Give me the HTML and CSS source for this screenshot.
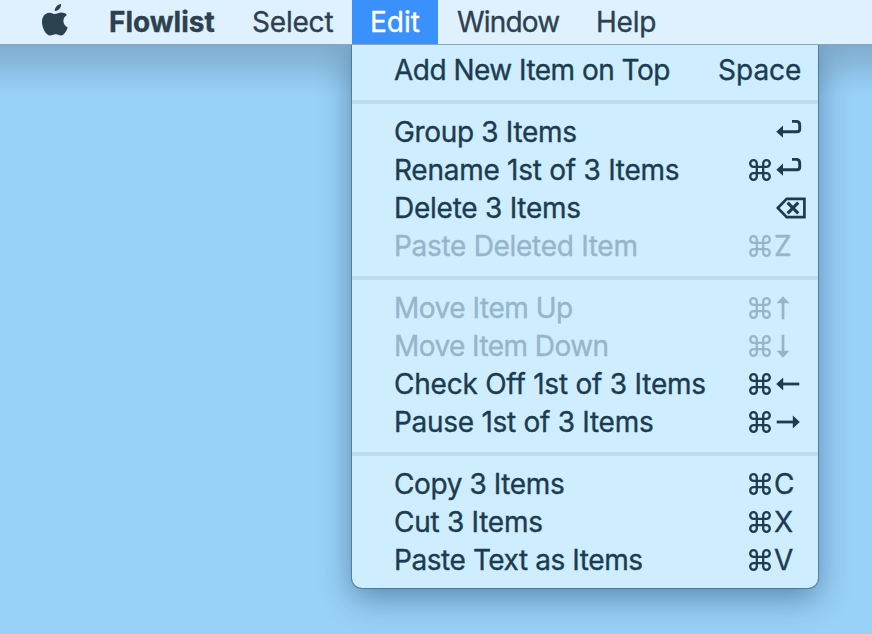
FILE: index.html
```html
<!DOCTYPE html>
<html lang="en">
<head>
<meta charset="utf-8">
<title>Flowlist</title>
<link rel="stylesheet" href="styles.css">
</head>
<body>
<svg class="defs" aria-hidden="true">
  <symbol id="cmd" viewBox="0 0 22 22"><path d="M7.8 4.5A3.3 3.3 0 1 0 4.5 7.8H17.5A3.3 3.3 0 1 0 14.2 4.5V17.5A3.3 3.3 0 1 0 17.5 14.2H4.5A3.3 3.3 0 1 0 7.8 17.5Z" fill="none" stroke="currentColor" stroke-width="2.3"/></symbol>
  <symbol id="return" viewBox="0 0 26 20"><path d="M16 2.4H20.2Q23.7 2.4 23.7 6V10.2Q23.7 12.7 21 12.7H5" fill="none" stroke="currentColor" stroke-width="2.9"/><path d="M.3 12.7 7 6.6V18.8Z" fill="currentColor"/></symbol>
  <symbol id="delete" viewBox="0 0 30 22"><path d="M1.8 11 10.7 1.9H28.4V20.1H10.7Z" fill="none" stroke="currentColor" stroke-width="2.7"/><path d="M11.6 5.6 22.2 16.4M22.2 5.6 11.6 16.4" fill="none" stroke="currentColor" stroke-width="3.1"/></symbol>
  <symbol id="left" viewBox="0 0 24 14"><path d="M5 7H23.3" stroke="currentColor" stroke-width="2.8"/><path d="M.2 7 7.2 .5V13.5Z" fill="currentColor"/></symbol>
  <symbol id="up" viewBox="0 0 14 24"><path d="M7 5V23.3" stroke="currentColor" stroke-width="2.8"/><path d="M7 .3 13.5 7.2H.5Z" fill="currentColor"/></symbol>
</svg>
<nav class="menubar">
  <svg class="apple" viewBox="0 0 26 32"><path d="M13 10.1C11.6 10.1 9.8 8.7 7.5 8.7 3.2 8.7 0 12.3 0 18.2 0 24.2 4.3 31.5 8 31.5 9.9 31.5 11 30.2 13.6 30.2 16.1 30.2 16.7 31.4 18.9 31.4 22.2 31.4 24.8 26.2 25.7 23.4 23.1 22.3 21.4 20 21.4 17.1 21.4 14.5 22.7 12.3 24.9 11 23.5 9.2 21.4 8.5 19.2 8.5 16.7 8.5 14.8 10.1 13 10.1ZM12.8 7C12.5 3.8 15.5.4 19.1 0 19.5 3.7 16.3 7.2 12.8 7Z" fill="currentColor"/></svg>
  <span class="title app">Flowlist</span>
  <span class="title select">Select</span>
  <span class="title active">Edit</span>
  <span class="title window">Window</span>
  <span class="title help">Help</span>
</nav>
<main class="desktop">
  <div class="menu">
    <div class="item"><span class="label l-add">Add New Item on Top</span><span class="keys wide">Space</span></div>
    <hr>
    <div class="item"><span class="label l-group">Group 3 Items</span><span class="keys single"><svg class="return"><use href="#return"/></svg></span></div>
    <div class="item"><span class="label l-rename">Rename 1st of 3 Items</span><span class="keys"><svg class="cmd"><use href="#cmd"/></svg><svg class="return"><use href="#return"/></svg></span></div>
    <div class="item"><span class="label l-delete">Delete 3 Items</span><span class="keys single"><svg class="delete"><use href="#delete"/></svg></span></div>
    <div class="item disabled"><span class="label l-pdel">Paste Deleted Item</span><span class="keys"><svg class="cmd"><use href="#cmd"/></svg>Z</span></div>
    <hr>
    <div class="item disabled"><span class="label l-up">Move Item Up</span><span class="keys"><svg class="cmd"><use href="#cmd"/></svg><svg class="vertical"><use href="#up"/></svg></span></div>
    <div class="item disabled"><span class="label l-down">Move Item Down</span><span class="keys"><svg class="cmd"><use href="#cmd"/></svg><svg class="vertical flip"><use href="#up"/></svg></span></div>
    <div class="item"><span class="label l-check">Check Off 1st of 3 Items</span><span class="keys"><svg class="cmd"><use href="#cmd"/></svg><svg class="horizontal"><use href="#left"/></svg></span></div>
    <div class="item"><span class="label l-pause">Pause 1st of 3 Items</span><span class="keys"><svg class="cmd"><use href="#cmd"/></svg><svg class="horizontal flip"><use href="#left"/></svg></span></div>
    <hr>
    <div class="item"><span class="label l-copy">Copy 3 Items</span><span class="keys"><svg class="cmd"><use href="#cmd"/></svg>C</span></div>
    <div class="item"><span class="label l-cut">Cut 3 Items</span><span class="keys"><svg class="cmd"><use href="#cmd"/></svg>X</span></div>
    <div class="item"><span class="label l-paste">Paste Text as Items</span><span class="keys"><svg class="cmd"><use href="#cmd"/></svg>V</span></div>
  </div>
</main>
</body>
</html>
```
FILE: styles.css
```css
* { box-sizing: border-box; }
body {
  margin: 0;
  width: 872px;
  height: 634px;
  overflow: hidden;
  background: #9ad1f8;
  font: 28px/38px Inter, "Liberation Sans", sans-serif;
  color: #1b3c50;
  -webkit-text-stroke: .35px currentColor;
}
.defs { display: none; }
.menubar {
  display: flex;
  height: 45px;
  padding-left: 42px;
  border-bottom: 1px solid #86a8bf;
  background: #dff1fe;
  color: #2c414f;
}
.apple { width: 26px; height: 32px; margin-top: 4px; flex: none; }
.title { height: 44px; line-height: 44px; white-space: nowrap; }
.app { width: 143px; margin-left: 41px; font-weight: 700; }
.select { width: 100px; letter-spacing: -.2px; }
.active { width: 86px; padding-left: 18px; background: #3a91fb; color: #fff; }
.window { margin-left: 19px; width: 139px; letter-spacing: -.8px; }
.help { letter-spacing: -.25px; }
.desktop {
  height: 589px;
  padding-left: 352px;
  background: linear-gradient(#80add0 0, #86b6d9 14px, #91c5eb 32px, #9ad1f8 50px);
}
.menu {
  width: 466px;
  height: 543px;
  padding-top: 6px;
  border-radius: 0 0 10px 10px;
  background: #ceedff;
  box-shadow: 0 0 0 1px rgba(40, 80, 110, .5), 0 10px 32px rgba(0, 35, 65, .42);
  clip-path: inset(0 -60px -60px -60px);
}
.item { display: flex; height: 38px; padding-left: 42px; white-space: nowrap; }
.label { flex: 1; }
.l-add { letter-spacing: -.52px; }
.l-group { letter-spacing: -.33px; }
.l-rename { letter-spacing: -.26px; }
.l-delete { letter-spacing: -.25px; }
.l-pdel { letter-spacing: -.3px; }
.l-up { letter-spacing: -.48px; }
.l-down { letter-spacing: -.56px; }
.l-check { letter-spacing: -.23px; }
.l-pause { letter-spacing: -.28px; }
.l-copy { letter-spacing: -.4px; }
.l-cut { letter-spacing: -.27px; }
.l-paste { letter-spacing: -.43px; }
.keys { display: flex; align-items: center; gap: 3px; width: 69px; }
.keys.wide { width: 100px; }
.keys.single { width: 42px; }
.disabled { color: #97b5c9; }
hr { height: 4px; margin: 11px 0 9px; border: 0; background: #bedced; }
.cmd { width: 22px; height: 22px; flex: none; }
.keys > .return { width: 26px; height: 20px; margin: -6px 0 0 2px; }
.single > .return { margin-left: 0; }
.keys.single > .return { margin-left: 0; }
.delete { width: 30px; height: 22px; }
.horizontal { width: 24px; height: 14px; margin-left: 2px; }
.vertical { width: 14px; height: 24px; margin-left: 2px; }
.horizontal.flip { transform: scaleX(-1); }
.vertical.flip { transform: scaleY(-1); }
```
